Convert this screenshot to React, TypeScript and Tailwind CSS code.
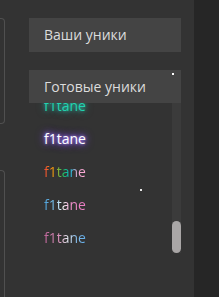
import React from "react";

/* ── Unique name styles shown in the "ready" list ── */

type Uniq = { id: number; className: string; style?: React.CSSProperties };

const uniqs: Uniq[] = [
  {
    id: 1,
    className: "text-[#22d3b0]",
    style: { textShadow: "0 0 4px rgba(45,212,191,0.9), 0 0 8px rgba(45,212,191,0.5)" },
  },
  {
    id: 2,
    className: "text-white",
    style: { textShadow: "0 0 3px #a78bfa, 0 0 6px #8b5cf6, 0 0 10px #7c3aed" },
  },
  {
    id: 3,
    className:
      "bg-[linear-gradient(90deg,#f04438_0%,#f59e0b_22%,#22c55e_45%,#06b6d4_62%,#f9a8d4_80%,#f9a8d4_100%)] bg-clip-text text-transparent",
  },
  {
    id: 4,
    className:
      "bg-[linear-gradient(90deg,#4b9fd8_0%,#7cc4ee_25%,#ffffff_45%,#f08fcb_65%,#e879c0_100%)] bg-clip-text text-transparent",
  },
  {
    id: 5,
    className:
      "bg-[linear-gradient(90deg,#c0649a_0%,#d68fb8_35%,#e8e8f0_55%,#8cc0ec_75%,#5aa8e6_100%)] bg-clip-text text-transparent",
  },
];

const App = () => {
  return (
    <div
      className="relative flex h-[297px] w-[219px] overflow-hidden bg-[#333333]"
      style={{ fontFamily: '"Open Sans", "Noto Sans", sans-serif' }}
    >
      {/* Left panels (edge of neighbouring column) */}
      <div className="flex w-[5px] flex-col">
        <div className="mt-[18px] h-[116px] w-[5px] rounded-r-[4px] border border-l-0 border-[#505050]" />
        <div className="mt-[46px] h-[140px] w-[5px] rounded-tr-[4px] border border-b-0 border-l-0 border-[#505050]" />
      </div>

      {/* Main column */}
      <div className="ml-[24px] flex w-[152px] flex-col pt-[18px]">
        <div className="flex h-[34px] items-center bg-[#444444] pl-[15px] text-[14px] leading-[20px] text-[#dcdcdc]">
          Ваши уники
        </div>

        <div className="relative mt-[18px] flex h-[33px] items-center bg-[#444444] pl-[15px] text-[14px] leading-[20px] text-[#dcdcdc]">
          Готовые уники
          <span className="absolute right-[7px] top-[3px] h-[2px] w-[2px] bg-white" />
        </div>

        {/* Scrolled list + scrollbar */}
        <div className="flex h-[150px]">
          <div className="flex-1 overflow-hidden">
            <div className="-mt-[14px] flex flex-col">
              {uniqs.map((u) => (
                <div key={u.id} className="flex h-[33px] items-center pl-[15px]">
                  <span className={`text-[14px] leading-[20px] ${u.className}`} style={u.style}>
                    f1tane
                  </span>
                </div>
              ))}
            </div>
          </div>
          <div className="flex w-[9px] flex-col justify-end bg-[#3b3b3b]">
            <div className="h-[32px] w-[9px] rounded-full bg-[#a9a6a6]" />
          </div>
        </div>
      </div>

      {/* Stray pixel */}
      <span className="absolute left-[140px] top-[189px] h-[2px] w-[2px] bg-[#e8e8e8]" />

      {/* Right dark strip */}
      <div className="ml-auto h-full w-[25px] bg-[#262626]" />
    </div>
  );
};

export default App;
